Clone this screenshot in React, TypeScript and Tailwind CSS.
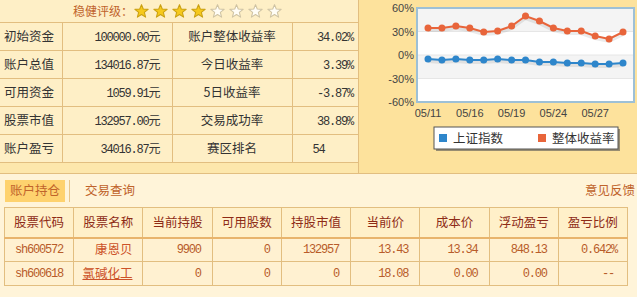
import React from "react";

const font = { fontFamily: '"Noto Sans CJK SC", "Noto Sans", sans-serif' };
const mono = "font-['Liberation_Mono',monospace] tracking-[-1.2px]";

const summary = [
  ["初始资金", "100000.00", "账户整体收益率", "34.02%"],
  ["账户总值", "134016.87", "今日收益率", "3.39%"],
  ["可用资金", "1059.91", "5日收益率", "-3.87%"],
  ["股票市值", "132957.00", "交易成功率", "38.89%"],
  ["账户盈亏", "34016.87", "赛区排名", "54"],
];

const holdings = [
  { code: "sh600572", name: "康恩贝", link: false, hold: "9900", avail: "0", value: "132957", price: "13.43", cost: "13.34", pl: "848.13", ratio: "0.642%" },
  { code: "sh600618", name: "氯碱化工", link: true, hold: "0", avail: "0", value: "0", price: "18.08", cost: "0.00", pl: "0.00", ratio: "--" },
];

const heads = ["股票代码", "股票名称", "当前持股", "可用股数", "持股市值", "当前价", "成本价", "浮动盈亏", "盈亏比例"];

const orange = [28, 28, 26, 28, 32, 31, 26, 16, 21, 28, 31, 31, 36, 39, 32];
const blue = [59, 60, 59, 60, 60, 59, 60, 60, 62, 62, 63, 63, 64, 64, 63];
const px = (i: number) => 69 + i * 13.93;

function Star({ on }: { on: boolean }) {
  return (
    <svg width="15" height="15" viewBox="0 0 14 14">
      <polygon
        points="7,0.6 8.65,4.73 13.18,4.99 9.66,7.87 10.82,12.26 7,9.8 3.18,12.26 4.34,7.87 0.82,4.99 5.35,4.73"
        fill={on ? "#F6C91C" : "#FFFDF6"}
        stroke={on ? "#C9A013" : "#CFC3A3"}
        strokeWidth="1"
        strokeLinejoin="round"
      />
    </svg>
  );
}

function Chart() {
  const line = (ys: number[]) => ys.map((y, i) => `${px(i)},${y}`).join(" ");
  return (
    <svg width="278" height="173" viewBox="0 0 278 173">
      <rect x="58" y="8" width="217" height="94" fill="#fff" />
      <rect x="58" y="8" width="217" height="23.5" fill="#F4F4F4" />
      <rect x="58" y="55" width="217" height="23.5" fill="#F4F4F4" />
      {[31.5, 55, 78.5].map((y) => (
        <line key={y} x1="58" x2="275" y1={y} y2={y} stroke="#E6E6E6" />
      ))}
      <rect x="58" y="8" width="217" height="94" fill="none" stroke="#9DC0D6" strokeWidth="2" />
      {[["60%", 12], ["30%", 35.5], ["0%", 59], ["-30%", 82.5], ["-60%", 106]].map(([t, y]) => (
        <text key={t} x="55" y={y} textAnchor="end" fontSize="11" fill="#444" fontFamily="Liberation Sans">
          {t}
        </text>
      ))}
      {["05/11", "05/16", "05/19", "05/24", "05/27"].map((t, i) => (
        <text key={t} x={px(i * 3)} y="117" textAnchor="middle" fontSize="11" fill="#444" fontFamily="Liberation Sans">
          {t}
        </text>
      ))}
      <polyline points={line(blue.map((y) => y + 2))} fill="none" stroke="#000" strokeOpacity="0.08" strokeWidth="4" />
      <polyline points={line(orange.map((y) => y + 2))} fill="none" stroke="#000" strokeOpacity="0.08" strokeWidth="4" />
      <polyline points={line(blue)} fill="none" stroke="#2E86CB" strokeWidth="2" />
      <polyline points={line(orange)} fill="none" stroke="#E8653B" strokeWidth="2" />
      {blue.map((y, i) => (
        <circle key={"b" + i} cx={px(i)} cy={y} r="3.5" fill="#2E86CB" />
      ))}
      {orange.map((y, i) => (
        <circle key={"o" + i} cx={px(i)} cy={y} r="3.5" fill="#E8653B" />
      ))}
      <rect x="77" y="129" width="184" height="22" fill="#555" opacity="0.6" />
      <rect x="75" y="127" width="184" height="22" fill="#fff" stroke="#555" strokeWidth="1" />
      <rect x="80" y="134" width="8" height="8" fill="#2E86CB" />
      <text x="94" y="143" fontSize="12.5" fill="#333" fontFamily="Noto Sans CJK SC">上证指数</text>
      <rect x="179" y="134" width="8" height="8" fill="#E8653B" />
      <text x="193" y="143" fontSize="12.5" fill="#333" fontFamily="Noto Sans CJK SC">整体收益率</text>
    </svg>
  );
}

export default function App() {
  return (
    <div className="w-[637px] h-[301px] bg-white overflow-hidden text-[12px] text-[#333]" style={font}>
      <div className="flex h-[174px] border-b border-[#E2BE80]">
        <div className="w-[359px] flex flex-col bg-[#FEEFC6] border-r border-[#E2BE80]">
          <div className="h-[22px] flex items-center pl-[73px]">
            <span className="text-[#C0632B] mr-[1px]">稳健评级：</span>
            <div className="flex gap-[4px]">
              {[1, 2, 3, 4, 5, 6, 7, 8].map((i) => (
                <Star key={i} on={i <= 4} />
              ))}
            </div>
          </div>
          <table className="border-collapse w-full table-fixed">
            <colgroup>
              <col className="w-[62px]" />
              <col className="w-[110px]" />
              <col className="w-[120px]" />
              <col />
            </colgroup>
            <tbody>
              {summary.map(([a, b, c, d]) => (
                <tr key={a} className="h-[28px] border-y border-[#E2BE80]">
                  <td className="pl-[4px] text-[12.5px] border-r border-[#E2BE80]">{a}</td>
                  <td className="text-right pr-[11px] border-r border-[#E2BE80]">
                    <span className={mono}>{b}</span>元
                  </td>
                  <td className="text-center text-[12.5px] border-r border-[#E2BE80]">{c}</td>
                  <td className={d === "54" ? "pl-[20px]" : "text-right pr-[5px]"}>
                    <span className={mono}>{d}</span>
                  </td>
                </tr>
              ))}
            </tbody>
          </table>
          <div className="flex-1 bg-[#FDE7AC]" />
        </div>
        <div className="flex-1 bg-[#FDE29C]">
          <Chart />
        </div>
      </div>

      <div className="h-[123px] bg-[#FFF4D9] flex flex-col">
        <div className="h-[33px] flex items-center px-[5px] text-[#C0632B]">
          <div className="h-[22px] px-[5px] flex items-center bg-[#FED26E] text-[12.5px]">账户持仓</div>
          <div className="w-px h-[22px] bg-[#E8C68A] ml-[4px]" />
          <div className="ml-[15px] text-[12.5px]">交易查询</div>
          <div className="ml-auto mr-[-3px] text-[12.5px]">意见反馈</div>
        </div>
        <table className="ml-[4px] w-[624px] border-collapse table-fixed">
          <thead>
            <tr className="h-[30px] bg-[#FFF0C9] border border-[#E2BE80] border-b-2 border-b-[#E8B46C]">
              {heads.map((h) => (
                <th key={h} className="font-normal text-[12.5px] text-[#8E2B16] border-r border-[#E2BE80]">
                  {h}
                </th>
              ))}
            </tr>
          </thead>
          <tbody className="bg-[#FFF1D1]">
            {holdings.map((r) => (
              <tr key={r.code} className="h-[24px] border border-[#E2BE80] text-[#B85C2A]">
                <td className={`text-center border-r border-[#E2BE80] ${mono}`}>{r.code}</td>
                <td className="text-right pr-[10px] border-r border-[#E2BE80] text-[12.5px] text-[#CC5228]">
                  <span className={r.link ? "underline" : ""}>{r.name}</span>
                </td>
                {[r.hold, r.avail, r.value, r.price, r.cost, r.pl].map((v, i) => (
                  <td key={i} className={`text-right pr-[11px] border-r border-[#E2BE80] ${mono}`}>
                    {v}
                  </td>
                ))}
                <td className={`border-r border-[#E2BE80] ${mono} ${r.ratio === "--" ? "text-right pr-[13px]" : "text-right pr-[10px]"}`}>
                  {r.ratio}
                </td>
              </tr>
            ))}
          </tbody>
        </table>
      </div>
    </div>
  );
}
